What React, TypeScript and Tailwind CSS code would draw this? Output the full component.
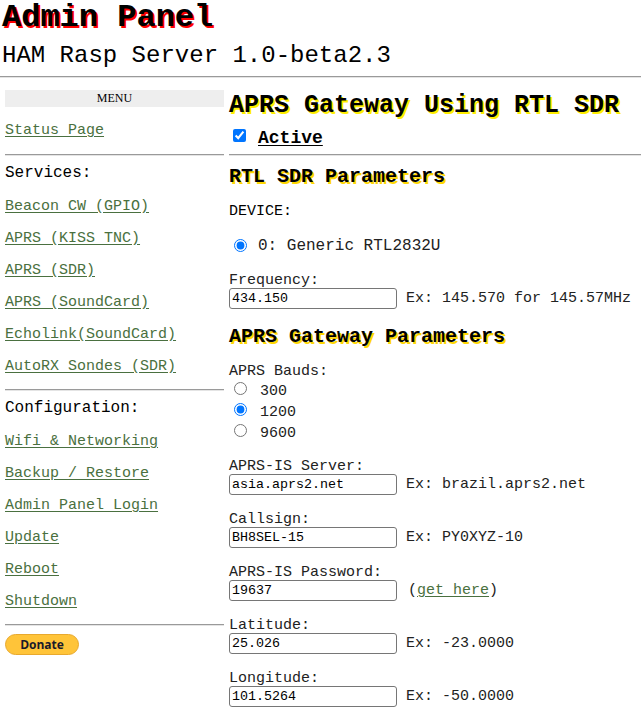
const mono = "font-['Liberation_Mono','Courier_New',monospace]";

function Side({ children }: { children: string }) {
  return (
    <a href="#" className="block h-8 text-[15px] leading-8 text-[#4a7040] underline underline-offset-2">
      {children}
    </a>
  );
}

function Heading({ children }: { children: string }) {
  return <div className="h-[35px] text-[16px] leading-[35px] text-black">{children}</div>;
}

function Rule() {
  return <hr className="h-[2px] border-0 border-t border-b border-t-[#9a9a9a] border-b-[#e4e4e4]" />;
}

function Field({ label, value, hint, link }: { label: string; value: string; hint?: string; link?: boolean }) {
  return (
    <div className="h-[53px]">
      <div className="h-3 text-[15px] leading-3 text-[#222]">{label}</div>
      <div className="flex items-center h-[23px]">
        <input
          defaultValue={value}
          className={`${mono} w-[168px] h-[21px] border border-[#767676] rounded-[3px] px-[2px] text-[13.33px] text-black bg-white`}
        />
        {hint && <span className="ml-[9px] pt-[2px] text-[15px] text-[#222]">{hint}</span>}
        {link && (
          <span className="ml-[11px] pt-[2px] text-[15px] text-[#222]">
            (<a href="#" className="text-[#4a7040] underline underline-offset-2">get here</a>)
          </span>
        )}
      </div>
    </div>
  );
}

function Radio({ label, checked, name }: { label: string; checked?: boolean; name: string }) {
  return (
    <label className="flex items-center h-[21px] pt-[1px] text-[15px] text-[#222]">
      <input type="radio" name={name} defaultChecked={checked} className="ml-[5px] mr-[13px] mt-[-7px] w-[13px] h-[13px]" />
      {label}
    </label>
  );
}

export default function App() {
  return (
    <div className={`${mono} w-[641px] h-[716px] overflow-hidden bg-white text-black`}>
      <h1 className="pl-[2px] h-9 text-[32px] leading-9 font-bold text-black [text-shadow:2px_2px_0_#ff0000]">
        Admin Panel
      </h1>
      <div className="pl-[2px] pt-[6px] h-10 text-[24px] leading-[27px]">HAM Rasp Server 1.0-beta2.3</div>
      <Rule />
      <div className="flex pt-[12px]">
        <aside className="w-[219px] ml-[5px] shrink-0">
          <div className="h-[17px] bg-[#eeeeee] text-center font-['Liberation_Serif',serif] text-[12px] leading-[17px]">MENU</div>
          <div className="mt-[8px]"><Side>Status Page</Side></div>
          <div className="mt-[7px]"><Rule /></div>
          <Heading>Services:</Heading>
          <div>
            <Side>Beacon CW (GPIO)</Side>
            <Side>APRS (KISS TNC)</Side>
            <Side>APRS (SDR)</Side>
            <Side>APRS (SoundCard)</Side>
            <Side>Echolink(SoundCard)</Side>
            <Side>AutoRX Sondes (SDR)</Side>
          </div>
          <div className="mt-[6px]"><Rule /></div>
          <Heading>Configuration:</Heading>
          <div>
            <Side>Wifi &amp; Networking</Side>
            <Side>Backup / Restore</Side>
            <Side>Admin Panel Login</Side>
            <Side>Update</Side>
            <Side>Reboot</Side>
            <Side>Shutdown</Side>
          </div>
          <div className="mt-[6px]"><Rule /></div>
          <button className="block mt-[8px] w-[74px] h-[21px] rounded-full bg-[#ffc439] border border-[#e8a92e] font-['Open_Sans',sans-serif] font-bold text-[12px] leading-[18px] text-[#1a1a2a]">
            Donate
          </button>
        </aside>
        <main className="ml-[5px] w-[412px]">
          <h2 className="h-[32px] text-[25px] leading-[32px] font-bold [text-shadow:2px_2px_0_#ffee00]">
            APRS Gateway Using RTL SDR
          </h2>
          <label className="flex items-center h-[32px] pl-[4px]">
            <input type="checkbox" defaultChecked className="w-[13px] h-[13px] mr-[12px] mt-[-5px]" />
            <span className="text-[18px] font-bold underline underline-offset-2">Active</span>
          </label>
          <Rule />
          <h3 className="mt-[9px] h-[27px] text-[20px] leading-[24px] font-bold [text-shadow:2px_2px_0_#ffd700]">RTL SDR Parameters</h3>
          <div className="mt-[11px] h-[20px] text-[15px] leading-[18px] text-black">DEVICE:</div>
          <div className="mt-[11px] h-[24px]">
            <label className="flex items-center h-[24px] text-[16px] text-[#222]">
              <input type="radio" name="dev" defaultChecked className="ml-[5px] mr-[11px] mt-[-2px] w-[13px] h-[13px]" />
              0: Generic RTL2832U
            </label>
          </div>
          <div className="mt-[17px]">
            <Field label="Frequency:" value="434.150" hint="Ex: 145.570 for 145.57MHz" />
          </div>
          <h3 className="-mt-[3px] h-[27px] text-[20px] leading-[24px] font-bold [text-shadow:2px_2px_0_#ffd700]">APRS Gateway Parameters</h3>
          <div className="mt-[11px] h-[18px] text-[15px] leading-[18px] text-[#222]">APRS Bauds:</div>
          <Radio name="b" label="300" />
          <Radio name="b" label="1200" checked />
          <Radio name="b" label="9600" />
          <div className="mt-[17px]">
            <Field label="APRS-IS Server:" value="asia.aprs2.net" hint="Ex: brazil.aprs2.net" />
            <Field label="Callsign:" value="BH8SEL-15" hint="Ex: PY0XYZ-10" />
            <Field label="APRS-IS Password:" value="19637" link />
            <Field label="Latitude:" value="25.026" hint="Ex: -23.0000" />
            <Field label="Longitude:" value="101.5264" hint="Ex: -50.0000" />
          </div>
        </main>
      </div>
    </div>
  );
}
